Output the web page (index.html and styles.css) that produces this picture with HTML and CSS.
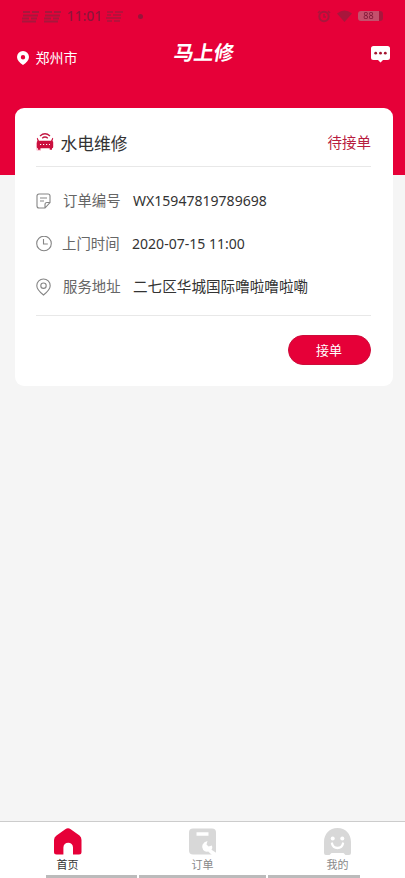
FILE: index.html
```html
<!DOCTYPE html>
<html lang="zh-CN">
<head>
<meta charset="utf-8">
<meta name="viewport" content="width=device-width, initial-scale=1">
<title>马上修</title>
<link rel="stylesheet" href="styles.css">
</head>
<body>
<div class="app">
  <header class="hero">
    <div class="status">
      <svg class="sim" width="40" height="13" viewBox="0 0 40 13"><path d="M1 2h7M10 2h7M1 5.500h15M0 8.500h7M9 8.500h6M0 11.500h14M23 2h7M32 2h7M23 5.500h15M22 8.500h7M31 8.500h6M22 11.500h14" stroke="currentColor" stroke-width="1.800"/></svg>
      <span class="clock">11:01</span>
      <svg class="net" width="18" height="13" viewBox="0 0 18 13"><path d="M1 2h6M9 2h8M1 5h4M7 5h8M0 8h15M1 11h5M8 11h6" stroke="currentColor" stroke-width="1.300"/></svg>
      <span class="dot"></span>
      <span class="status-right">
        <svg width="14" height="14" viewBox="0 0 14 14"><circle cx="7" cy="7.500" r="4.700" fill="none" stroke="currentColor" stroke-width="2"/><path d="M7 5v3h2M1 4l2-2M13 4l-2-2" fill="none" stroke="currentColor" stroke-width="1.500"/></svg>
        <svg width="15" height="12" viewBox="0 0 15 12"><path d="M0 3.500Q7.500-2.500 15 3.500L7.500 12z" fill="currentColor"/></svg>
        <span class="battery">88</span>
      </span>
    </div>
    <div class="topbar">
      <div class="city">
        <svg width="12" height="14" viewBox="0 0 12 14"><path fill="#fff" fill-rule="evenodd" d="M6 0a6 6 0 0 1 6 6c0 3.200-2.500 5.500-6 8-3.500-2.500-6-4.800-6-8a6 6 0 0 1 6-6zm0 4a2.200 2.200 0 1 0 0 4.400A2.200 2.200 0 0 0 6 4z"/></svg>
        <span>郑州市</span>
      </div>
      <h1 class="brand">马上修</h1>
      <svg class="chat" width="19" height="17" viewBox="0 0 19 17"><path fill="#fff" d="M2.500 0h14A2.500 2.500 0 0 1 19 2.500v9a2.500 2.500 0 0 1-2.500 2.500H12l-2.500 2.500L7 14H2.500A2.500 2.500 0 0 1 0 11.500v-9A2.500 2.500 0 0 1 2.500 0z"/><g fill="#a3142f"><circle cx="4.700" cy="7.200" r="1.400"/><circle cx="9.500" cy="7.200" r="1.400"/><circle cx="14.300" cy="7.200" r="1.400"/></g></svg>
    </div>
  </header>

  <main class="card">
    <div class="card-head">
      <svg class="type-icon" width="18" height="19" viewBox="0 0 18 19"><path d="M0 10h5v8H2q-2 0-2-2z" fill="#fbd3dd"/><g fill="none" stroke="#c31742" stroke-width="1.300"><path d="M4 3q5-4.500 10 0M6.200 5.200q2.800-2.400 5.600 0"/></g><path fill="#cb103f" d="M1.500 4.800l1.500 2.900h12l1.500-2.900.7.400-.7 2.900q.7.300.7 1.200v4.700q0 1.300-1.200 1.300v1.400h-2.300v-1.400H4.300v1.400H2v-1.400q-1.200 0-1.200-1.300V9.300q0-.9.700-1.200l-.7-2.900z"/><path stroke="#fff" stroke-width="1.100" d="M4 11.500h1.200M7 11.500h1.200M10 11.500h1.200M13 11.500h1"/></svg>
      <h2>水电维修</h2>
      <span class="state">待接单</span>
    </div>
    <div class="rows">
      <div class="row r1">
        <svg width="16" height="16" viewBox="0 0 16 16"><path d="M3 1h9a2 2 0 0 1 2 2v6.500L9 15H3a2 2 0 0 1-2-2V3a2 2 0 0 1 2-2zM14 9.500h-3a2 2 0 0 0-2 2V15M4 5h7M4 8h4"/></svg>
        <span class="label">订单编号</span><span class="value">WX15947819789698</span>
      </div>
      <div class="row r2">
        <svg width="16" height="16" viewBox="0 0 16 16"><circle cx="8" cy="7.500" r="7.300"/><path d="M7.500 3v5h4.300"/></svg>
        <span class="label">上门时间</span><span class="value">2020-07-15 11:00</span>
      </div>
      <div class="row r3">
        <svg width="16" height="18" viewBox="0 0 16 18"><path d="M7.500 1a6.700 6.700 0 0 1 6.700 6.700c0 3.500-3 6.300-6.700 9.300-3.700-3-6.700-5.800-6.700-9.300A6.700 6.700 0 0 1 7.500 1z"/><circle cx="7.500" cy="7.700" r="2.700"/></svg>
        <span class="label">服务地址</span><span class="value">二七区华城国际噜啦噜啦嘞</span>
      </div>
    </div>
    <div class="actions"><button type="button">接单</button></div>
  </main>

  <nav class="tabs">
    <a class="tab active">
      <svg width="28" height="27" viewBox="0 0 28 27"><path fill="#e60038" d="M11.300 1.200Q14-.8 16.700 1.200L25.500 7.500Q27.500 9 27.500 12v12q0 2.500-2.500 2.500h-6V19.500a4.800 4.800 0 0 0-9.600 0v7H2.500Q0 26.500 0 24V12Q0 9 2.500 7.500z"/></svg>
      <span>首页</span>
    </a>
    <a class="tab">
      <svg width="28" height="27" viewBox="0 0 28 27"><path fill="#d8d8d8" d="M4 .5h19q4 0 4 4v22H4q-4 0-4-4v-18q0-4 4-4z"/><path d="M7.500 6h12" stroke="#fff" stroke-width="3.500"/><path fill="#fff" d="M18.500 13l-1 3.500 2 2 3.500-1q.8 2.500-.5 4.300L27.500 25v2H23l-3.800-3.500q-3.200.6-5-1.500-1.800-2.500-.7-5.300 1.500-3.200 5-3.700z"/></svg>
      <span>订单</span>
    </a>
    <a class="tab">
      <svg width="28" height="27" viewBox="0 0 28 27"><path fill="#d8d8d8" d="M13.500 0C21.500 0 27 6 27 14v11q0 2-2 2h-3.500l-2-2h-12l-2 2H2q-2 0-2-2V14C0 6 5.500 0 13.500 0z"/><circle cx="8.700" cy="10.500" r="2" fill="#fff"/><circle cx="18.300" cy="10.500" r="2" fill="#fff"/><path d="M8 15.500q1 4.500 5.500 4.500t5.500-4.500" fill="none" stroke="#fff" stroke-width="2.300" stroke-linecap="round"/></svg>
      <span>我的</span>
    </a>
    <div class="sysbar"><i></i><i class="wide"></i><i></i></div>
  </nav>
</div>
</body>
</html>
```
FILE: styles.css
```css
* { box-sizing: border-box; }
body {
  margin: 0;
  font-family: "Noto Sans", "Noto Sans CJK SC", sans-serif;
  color: #333;
}
svg { display: block; flex: none; }
.app {
  height: 878px;
  display: flex;
  flex-direction: column;
  background: #f5f5f5;
  overflow: hidden;
}
.hero { height: 174.5px; flex: none; background: #e60038; }
.status {
  height: 32px;
  padding: 0 22px;
  display: flex;
  align-items: center;
  color: #a8163c;
  line-height: 32px;
  filter: blur(0.6px);
}
.sim { margin-right: 5px; }
.clock { width: 39px; font-size: 14px; font-weight: 500; color: #8c143a; }
.net { margin-right: 14px; }
.dot { width: 5px; height: 5px; border-radius: 50%; background: #98143a; }
.status-right { margin-left: auto; display: flex; align-items: center; gap: 6px; }
.battery {
  width: 25px;
  height: 10px;
  border-radius: 3px;
  background: #c4506c;
  border-right: 4px solid #a8163c;
  color: #7c1434;
  font-size: 9px;
  line-height: 10px;
  text-align: center;
}
.topbar {
  height: 50px;
  padding: 0 15px 0 17px;
  display: grid;
  grid-template-columns: 1fr auto 1fr;
  align-items: center;
  color: #fff;
}
.city { display: flex; align-items: center; gap: 6.5px; margin-top: 1px; font-size: 14px; line-height: 20px; }
.brand {
  margin: -8px 0 0;
  font-size: 20px;
  line-height: 24px;
  font-weight: 700;
  transform: skewX(-10deg);
}
.chat { justify-self: end; margin-top: -5px; }
.card {
  height: 278px;
  margin: -66.5px 12.5px 0 14.5px;
  padding: 0 21.5px;
  border-radius: 9px;
  background: #fff;
  flex: none;
}
.card-head {
  height: 59px;
  padding-top: 11px;
  border-bottom: 1px solid #e8e8e8;
  display: flex;
  align-items: center;
}
.card-head h2 { margin: 2px 0 0 6.5px; font-size: 16.8px; line-height: 24px; font-weight: 400; }
.state { margin: -2px 0 0 auto; color: #b81c40; font-size: 14.5px; line-height: 20px; }
.rows { height: 149px; padding-top: 13px; border-bottom: 1px solid #e8e8e8; }
.row { height: 42.7px; display: flex; align-items: center; font-size: 14.4px; line-height: 22px; white-space: nowrap; }
.row svg { fill: none; stroke: #858585; stroke-width: 1.1; }
.label { width: 70px; margin: -1px 0 0 11px; color: #666; }
.r2 .label { width: 70px; margin-left: 10px; }
.r3 .label { margin-top: 0; }
.value { font-size: 14.05px; }
.r3 .value { margin-top: -1px; font-size: 14.6px; }
.actions { display: flex; justify-content: flex-end; padding-top: 19px; }
.actions button {
  width: 83px;
  height: 30px;
  padding: 0 1px 0 0;
  border: 1px solid #ce0c3a;
  border-radius: 15px;
  background: #e60038;
  color: #fff;
  font: 13px/28px "Noto Sans", "Noto Sans CJK SC", sans-serif;
}
.tabs {
  height: 57px;
  margin-top: auto;
  border-top: 1px solid #ccc;
  background: #fff;
  display: grid;
  grid-template-columns: repeat(3, 135px);
  grid-template-rows: 53px 3px;
}
.tab { display: flex; flex-direction: column; align-items: center; padding-top: 6px; color: #888; font-size: 11px; line-height: 16px; }
.tab span { margin-top: 2px; }
.tab.active { color: #333; }
.sysbar { grid-column: 1 / -1; display: flex; gap: 2px; padding-left: 45.5px; }
.sysbar i { width: 91.5px; height: 3px; background: #bbb; }
.sysbar .wide { width: 127px; }
```
